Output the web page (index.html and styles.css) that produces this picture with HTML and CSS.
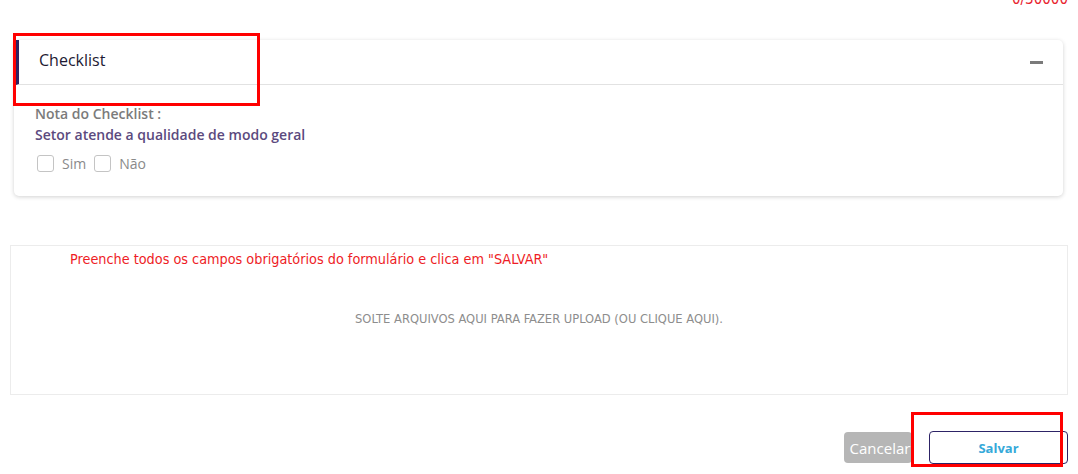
FILE: index.html
```html
<!DOCTYPE html>
<html lang="pt">
<head>
<meta charset="utf-8">
<link rel="stylesheet" href="styles.css">
</head>
<body>
<div class="page">
  <div class="counter">0/30000</div>
  <section class="card">
    <header class="card-head">
      <span class="card-title">Checklist</span>
      <span class="minus"></span>
    </header>
    <div class="card-body">
      <div class="nota">Nota do Checklist :</div>
      <div class="question">Setor atende a qualidade de modo geral</div>
      <div class="options">
        <label class="opt"><span class="box"></span>Sim</label>
        <label class="opt"><span class="box"></span>Não</label>
      </div>
    </div>
  </section>
  <div class="upload">
    <div class="hint">Preenche todos os campos obrigatórios do formulário e clica em "SALVAR"</div>
    <div class="drop">SOLTE ARQUIVOS AQUI PARA FAZER UPLOAD (OU CLIQUE AQUI).</div>
  </div>
  <div class="actions">
    <button class="btn cancel">Cancelar</button>
    <button class="btn save">Salvar</button>
  </div>
  <div class="mark mark-title"></div>
  <div class="mark mark-save"></div>
</div>
</body>
</html>
```
FILE: styles.css
```css
* { box-sizing: border-box; }
html, body { margin: 0; padding: 0; background: #fff; }
body { font-family: "Open Sans", "Noto Sans", sans-serif; width: 1078px; height: 474px; overflow: hidden; }
.page { position: relative; display: flow-root; padding: 0 10px 0 10px; height: 474px; }
.counter {
  position: absolute; right: 10px; top: -10px;
  color: #e8242f; font-size: 15px;
  font-family: "DejaVu Sans Condensed", "DejaVu Sans", sans-serif;
  font-stretch: condensed;
}
.card {
  margin: 40px 5px 0 4px;
  background: #fff;
  border-radius: 5px;
  box-shadow: 0 1px 4px rgba(0,0,0,0.18);
  height: 156px;
}
.card-head {
  display: flex; align-items: center; justify-content: space-between;
  height: 45px;
  border-left: 3px solid #2d2160;
  margin-left: 2px;
  border-bottom: 1px solid #e2e2e2;
  padding: 0 20px 4px 20px;
}
.card-title { font-size: 16px; color: #1d1a33; }
.minus { width: 13px; height: 3px; background: #7a7a7a; margin-top: 4px; }
.card-body { padding: 19px 21px 0 21px; }
.nota { font-size: 14px; font-weight: 600; color: #7b7b7b; line-height: 20px; }
.question { font-size: 14px; font-weight: 600; color: #5b4a7e; line-height: 20px; margin-top: 1px; }
.options { display: flex; gap: 8px; margin-top: 10px; padding-left: 2px; }
.opt { display: flex; align-items: center; gap: 8px; font-size: 14px; color: #8a8a8a; line-height: 17px; }
.box { width: 17px; height: 17px; border: 1.5px solid #c4c4c4; border-radius: 3px; background: #fff; }
.upload {
  margin-top: 49px;
  height: 150px;
  border: 1px solid #ececec;
  display: flex; flex-direction: column;
}
.hint {
  font-family: "DejaVu Sans Condensed", "DejaVu Sans", sans-serif;
  font-stretch: condensed;
  color: #ee1c25; font-size: 14.3px;
  padding: 5px 0 0 59px;
}
.drop {
  text-align: center; color: #8d8d8d; font-size: 12.8px;
  font-family: "DejaVu Sans Condensed", "DejaVu Sans", sans-serif;
  font-stretch: condensed;
  margin-top: 44px;
}
.actions {
  display: flex; justify-content: flex-end; align-items: flex-end; gap: 17px;
  margin-top: 36px;
}
.btn { font-family: "Open Sans", sans-serif; font-size: 15px; border-radius: 4px; cursor: pointer; }
.cancel {
  background: #b6b6b6; color: #fff; border: none;
  width: 68px; height: 31px; padding: 0 0 0 4px; white-space: nowrap; overflow: hidden;
  margin-bottom: 1px;
}
.save {
  background: #fff; color: #36a9d9; font-weight: 700; font-size: 13px;
  border: 1px solid #2d2366; width: 139px; height: 33px;
}
.mark { position: absolute; border: 3px solid #ff0000; pointer-events: none; }
.mark-title { left: 13px; top: 33px; width: 247px; height: 73px; }
.mark-save { left: 911px; top: 412px; width: 152px; height: 55px; }
```
